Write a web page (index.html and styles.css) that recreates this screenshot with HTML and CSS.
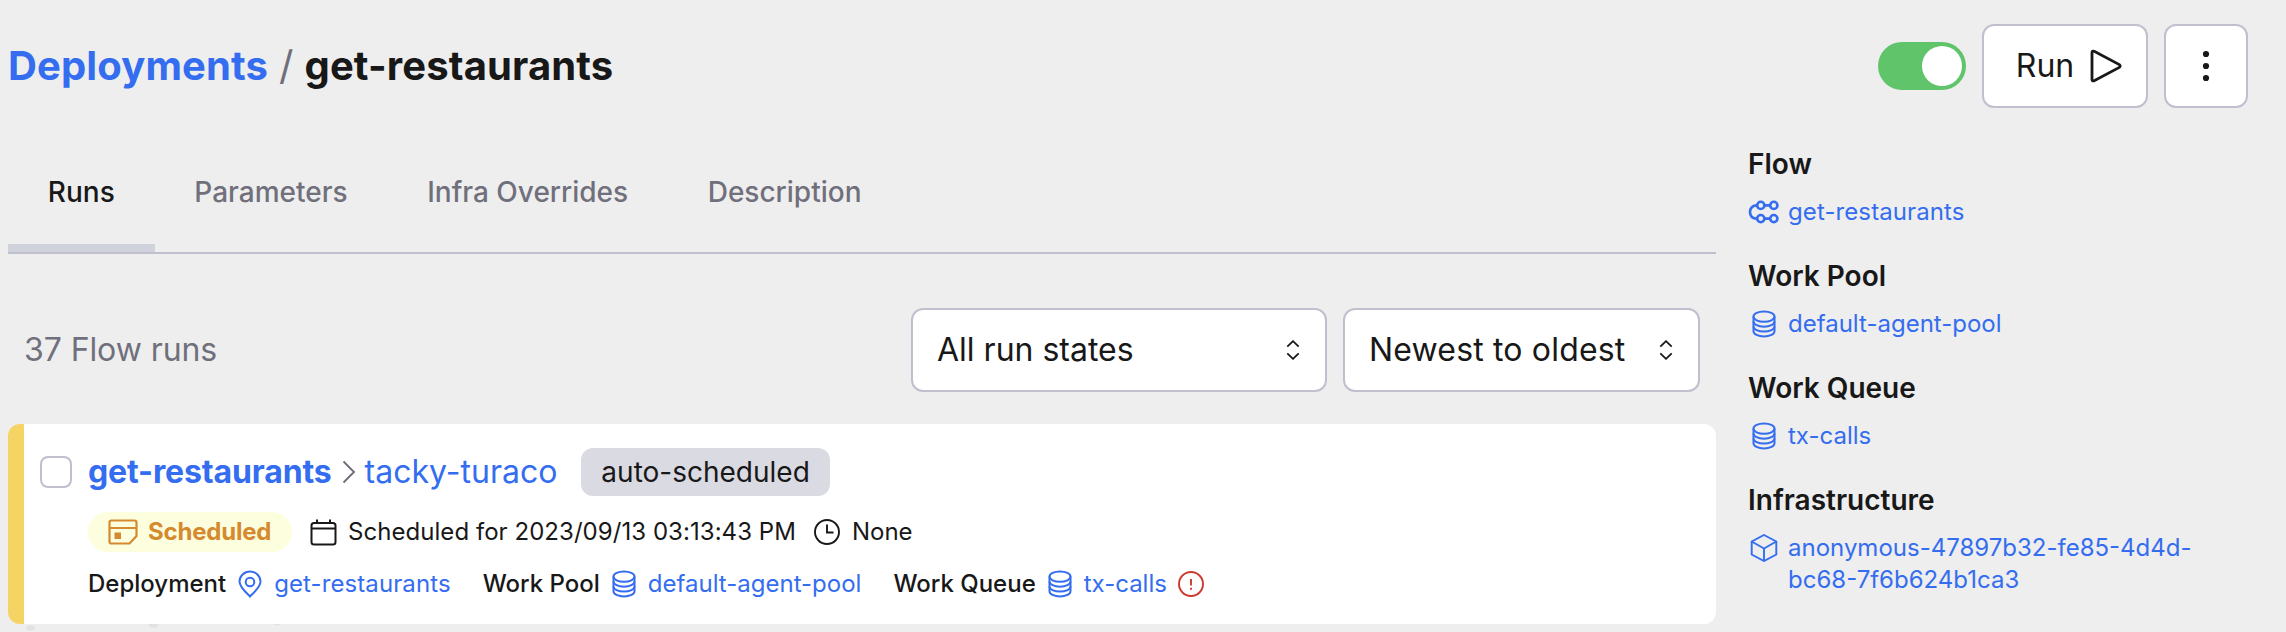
FILE: index.html
```html
<!DOCTYPE html>
<html lang="en">
<head>
<meta charset="utf-8">
<title>get-restaurants</title>
<link rel="stylesheet" href="styles.css">
</head>
<body>
<svg width="0" height="0" class="sprite">
  <symbol id="db" viewBox="0 0 24 28"><g fill="none" stroke="currentColor" stroke-width="2"><ellipse cx="12" cy="6.6" rx="10.5" ry="5.2"/><path d="M1.5 6.6v14.6c0 2.9 4.700 5.300 10.500 5.300s10.500-2.400 10.500-5.300V6.600"/><path d="M1.500 11.500c0 2.900 4.700 5.200 10.500 5.200s10.500-2.300 10.500-5.200M1.500 16.400c0 2.900 4.700 5.200 10.500 5.200s10.500-2.300 10.500-5.200"/></g></symbol>
  <symbol id="sort" viewBox="0 0 14 20"><path d="M1.300 6.700 7 1.200l5.700 5.500M1.300 13.300 7 18.800l5.700-5.500" fill="none" stroke="currentColor" stroke-width="1.800"/></symbol>
</svg>
<div class="page">
  <header class="header">
    <h1 class="crumbs"><a class="link">Deployments</a><span class="slash">/</span><span>get-restaurants</span></h1>
    <div class="actions">
      <span class="toggle"><span class="knob"></span></span>
      <button class="btn run">Run<svg width="32" height="34" viewBox="0 0 32 34"><path d="M2 3.600v26.800q0 2.200 2.200 1.300L29.300 18.400q1.800-1.400 0-2.800L4.200 2.300Q2 1.400 2 3.600z" fill="none" stroke="currentColor" stroke-width="2.800"/></svg></button>
      <button class="btn more"><svg width="8" height="32" viewBox="0 0 8 32"><g fill="currentColor"><circle cx="4" cy="4" r="3.100"/><circle cx="4" cy="16" r="3.100"/><circle cx="4" cy="28" r="3.100"/></g></svg></button>
    </div>
  </header>
  <div class="body">
    <main class="main">
      <nav class="tabs"><a class="tab active">Runs</a><a class="tab">Parameters</a><a class="tab">Infra Overrides</a><a class="tab">Description</a></nav>
      <div class="filters">
        <span class="count">37 Flow runs</span>
        <div class="select states">All run states<svg width="14" height="20"><use href="#sort"/></svg></div>
        <div class="select order">Newest to oldest<svg width="14" height="20"><use href="#sort"/></svg></div>
      </div>
      <article class="card">
        <span class="check"></span>
        <div class="info">
          <div class="title"><a class="link strong">get-restaurants</a><svg class="chev" width="14" height="24" viewBox="0 0 14 24"><path d="M1.500 1.500 12 12 1.500 22.500" fill="none" stroke="#70707c" stroke-width="1.900"/></svg><a class="link">tacky-turaco</a><span class="tag">auto-scheduled</span></div>
          <div class="row state">
            <span class="badge"><svg width="30" height="26" viewBox="0 0 30 26"><path d="M3.500 1.500h23q2 0 2 2V17L21.500 24.500h-18q-2 0-2-2v-19q0-2 2-2zM1.500 9h27" fill="none" stroke="currentColor" stroke-width="2.200"/><path d="M6.500 13.500H13V20H6.500z" fill="currentColor"/></svg>Scheduled</span>
            <svg class="cal" width="27" height="27" viewBox="0 0 27 27"><path d="M4 4h19q2.500 0 2.500 2.500V23q0 2.500-2.500 2.500H4q-2.500 0-2.500-2.500V6.500Q1.500 4 4 4zM1.500 9.500h24M7 .5V4M20 .5V4" fill="none" stroke="currentColor" stroke-width="2"/></svg>
            <span class="when">Scheduled for 2023/09/13 03:13:43 PM</span>
            <svg class="clock" width="26" height="26" viewBox="0 0 26 26"><g fill="none" stroke="currentColor" stroke-width="1.900"><circle cx="13" cy="13" r="12"/><path d="M13 5.500V13.500h6.500"/></g></svg>
            <span>None</span>
          </div>
          <div class="row links">
            <span class="pair"><b>Deployment</b><svg width="24" height="28" viewBox="0 0 24 28"><g fill="none" stroke="currentColor" stroke-width="2"><path d="M12 26.500C8.500 23 1.500 17 1.500 11.500a10.500 10 0 0 1 21 0C22.500 17 15.500 23 12 26.500z"/><circle cx="12" cy="12" r="4.300"/></g></svg><a class="wide">get-restaurants</a></span>
            <span class="pair"><b>Work Pool</b><svg width="24" height="28"><use href="#db"/></svg><a>default-agent-pool</a></span>
            <span class="pair"><b>Work Queue</b><svg width="24" height="28"><use href="#db"/></svg><a>tx-calls</a><svg class="alert" width="26" height="26" viewBox="0 0 26 26"><circle cx="13" cy="13" r="12" fill="none" stroke="currentColor" stroke-width="1.900"/><path d="M13 8v6.500M13 16.800v2" fill="none" stroke="currentColor" stroke-width="1.900"/></svg></span>
          </div>
        </div>
      </article>
      <svg class="dots" width="300" height="8" viewBox="0 0 300 8"><g fill="#e2e2e2"><ellipse cx="22.300" cy="4" rx="4.500" ry="2.700"/><ellipse cx="145.500" cy="1.300" rx="4.500" ry="2.700"/><ellipse cx="269" cy="-1.500" rx="4.500" ry="2.700"/></g></svg>
    </main>
    <aside class="side">
      <section><h2>Flow</h2><div class="item"><svg width="32" height="28" viewBox="0 0 32 28"><g fill="none" stroke="currentColor" stroke-width="2.600"><circle cx="12.800" cy="7.400" r="3.600"/><circle cx="25.800" cy="7.400" r="3.600"/><circle cx="12.800" cy="20.600" r="3.600"/><circle cx="25.800" cy="20.600" r="3.600"/><path d="M16.400 7.400h5.800M16.400 20.600h5.800M9.200 7.400C4.500 7.400 2 10 2 14s2.500 6.600 7.200 6.600"/></g></svg><a class="wide">get-restaurants</a></div></section>
      <section><h2>Work Pool</h2><div class="item"><svg width="32" height="28"><use href="#db"/></svg><a>default-agent-pool</a></div></section>
      <section><h2>Work Queue</h2><div class="item"><svg width="32" height="28"><use href="#db"/></svg><a>tx-calls</a></div></section>
      <section><h2>Infrastructure</h2><div class="item"><svg width="32" height="28" viewBox="0 0 32 28"><path d="M16 1 28.300 7.500v13L16 27 3.700 20.500v-13zM3.700 7.500 16 14.500l12.300-7M16 14.500V27" fill="none" stroke="currentColor" stroke-width="1.900"/></svg><a>anonymous-47897b32-fe85-4d4d-bc68-7f6b624b1ca3</a></div></section>
    </aside>
  </div>
</div>
</body>
</html>
```
FILE: styles.css
```css
* { box-sizing: border-box; }
body { margin: 0; height: 632px; overflow: hidden; background: #eeeeee; color: #181818; font-family: Inter, sans-serif; font-size: 24px; line-height: 32px; }
.sprite { display: block; height: 0; }
svg { flex: none; display: block; }
.page { padding: 24px 38px 0 8px; }
.header { display: flex; justify-content: space-between; align-items: center; height: 84px; }
.crumbs { display: flex; gap: 11px; margin: 0; font-size: 40px; line-height: 56px; font-weight: 700; letter-spacing: 0.12px; }
.link { color: #346df0; }
.slash { color: #70707c; font-weight: 400; }
.actions { display: flex; align-items: center; gap: 16px; }
.toggle { width: 88px; height: 48px; padding: 4px; border-radius: 24px; background: #5fc46a; display: flex; justify-content: flex-end; }
.knob { width: 40px; height: 40px; border-radius: 50%; background: #fff; }
.btn { display: flex; align-items: center; justify-content: center; height: 84px; border: 2px solid #c0bfce; border-radius: 12px; background: #fff; color: #181818; font: 400 32px/48px Inter, sans-serif; padding: 0; }
.run { width: 166px; gap: 16px; padding-left: 8px; }
.more { width: 84px; }
.body { display: grid; grid-template-columns: 1708px 500px; gap: 32px; }
.tabs { display: flex; height: 146px; border-bottom: 2px solid #c0bfce; }
.tab { padding: 64px 39.8px 0; height: 144px; font-size: 28px; line-height: 40px; font-weight: 500; color: #70707c; }
.active { color: #181818; border-bottom: 8px solid #d0d2db; }
.filters { display: flex; align-items: center; gap: 16px; height: 84px; margin: 54px 16px 32px; font-size: 32px; line-height: 48px; }
.count { flex: 1; color: #70707c; letter-spacing: -0.08px; }
.select { display: flex; align-items: center; justify-content: space-between; height: 84px; padding: 0 25px 0 24px; border: 2px solid #c0bfce; border-radius: 12px; background: #fff; }
.states { width: 416px; }
.order { width: 357px; letter-spacing: 0.17px; }
.card { display: flex; gap: 16px; height: 200px; padding: 24px 16px; border-left: 16px solid #f6d365; border-radius: 12px; background: #fff; }
.check { width: 32px; height: 32px; margin-top: 8px; border: 2px solid #c0bfce; border-radius: 8px; }
.title { display: flex; align-items: center; height: 48px; font-size: 32px; }
.strong { font-weight: 700; letter-spacing: -0.13px; }
.chev { margin: 0 9px 0 10px; }
.tag { height: 48px; margin-left: 24px; padding: 0 20px; border-radius: 12px; background: #dadae2; font-size: 28px; line-height: 48px; }
.row { display: flex; align-items: center; }
.state { height: 40px; margin-top: 16px; }
.badge { display: flex; align-items: center; gap: 10px; height: 40px; width: 204px; padding-left: 20px; border-radius: 20px; background: #fdfedd; color: #d58a2f; font-weight: 700; letter-spacing: -0.2px; }
.cal { margin: 0 11px 0 18px; }
.when { letter-spacing: 0.05px; }
.clock { margin: 0 12px 0 18px; }
.links { gap: 32px; margin-top: 16px; }
.wide { letter-spacing: 0.1px; }
.pair { display: flex; align-items: center; color: #346df0; }
.pair b { color: #181818; font-weight: 500; }
.pair svg { margin: 0 12px; }
.pair .alert { color: #cb3a2c; margin: 0 0 0 11px; }
.side { display: flex; flex-direction: column; gap: 28px; padding-top: 36px; }
.side h2 { margin: 0 0 12px; font-size: 28px; line-height: 40px; font-weight: 600; }
.item { display: flex; gap: 8px; color: #346df0; }
.item svg { margin-top: 2px; }
.item a { width: 420px; overflow-wrap: anywhere; }
```
